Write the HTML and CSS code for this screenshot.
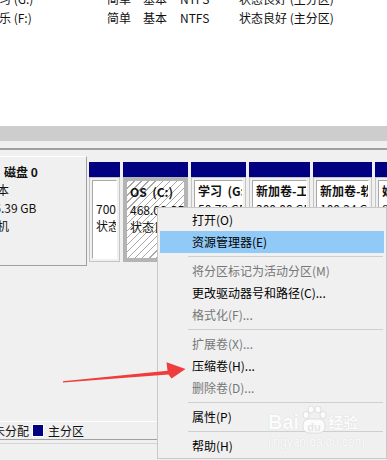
FILE: index.html
```html
<!DOCTYPE html>
<html lang="zh-CN">
<head>
<meta charset="utf-8">
<title>磁盘管理</title>
<link rel="stylesheet" href="styles.css">
</head>
<body>
<div class="screen">
  <div class="volumes">
    <div class="vol-list">
      <div class="row"><span>学习 (G:)</span><span>简单</span><span>基本</span><span>NTFS</span><span>状态良好 (主分区)</span></div>
      <div class="row"><span>娱乐 (F:)</span><span>简单</span><span>基本</span><span>NTFS</span><span>状态良好 (主分区)</span></div>
    </div>
  </div>
  <div class="hscroll"></div>
  <div class="splitter"></div>
  <div class="disks">
    <div class="disk">
      <div class="disk-label">
        <div class="dl-title">磁盘 0</div>
        <div class="dl-info">
          <div>基本</div>
          <div class="dl-size">476.39 GB</div>
          <div>联机</div>
        </div>
      </div>
      <div class="parts">
        <div class="part w1">
          <div class="phead"></div>
          <div class="pbody"><div class="pbox"><div>&nbsp;</div><div>700 MB</div><div>状态良好 (EFI 系统分区)</div></div></div>
        </div>
        <div class="part w2 sel">
          <div class="phead"></div>
          <div class="pbody"><div class="pbox"><div class="pname">OS&nbsp; (C:)</div><div>468.00 GB NTFS</div><div>状态良好 (启动, 页面文件)</div></div></div>
        </div>
        <div class="part w3">
          <div class="phead"></div>
          <div class="pbody"><div class="pbox"><div class="pname">学习&nbsp; (G:)</div><div>50.78 GB NTFS</div><div>状态良好 (主分区)</div></div></div>
        </div>
        <div class="part w4">
          <div class="phead"></div>
          <div class="pbody"><div class="pbox"><div class="pname">新加卷-工作 (E:)</div><div>300.00 GB NTFS</div><div>状态良好 (主分区)</div></div></div>
        </div>
        <div class="part w5">
          <div class="phead"></div>
          <div class="pbody"><div class="pbox"><div class="pname">新加卷-软件 (D:)</div><div>100.24 GB NTFS</div><div>状态良好 (主分区)</div></div></div>
        </div>
        <div class="part w6">
          <div class="phead"></div>
          <div class="pbody"><div class="pbox"><div class="pname">娱乐 (F:)</div><div>80.00 GB NTFS</div><div>状态良好 (主分区)</div></div></div>
        </div>
      </div>
    </div>
  </div>
  <div class="legend">
    <span class="lg-text">未分配</span>
    <span class="lg-swatch"></span>
    <span class="lg-text">主分区</span>
  </div>
  <div class="status-line"></div>

  <div class="menu">
    <div class="mi">打开(O)</div>
    <div class="mi hl">资源管理器(E)</div>
    <div class="sep"></div>
    <div class="mi dis">将分区标记为活动分区(M)</div>
    <div class="mi">更改驱动器号和路径(C)...</div>
    <div class="mi dis">格式化(F)...</div>
    <div class="sep"></div>
    <div class="mi dis">扩展卷(X)...</div>
    <div class="mi">压缩卷(H)...</div>
    <div class="mi dis">删除卷(D)...</div>
    <div class="sep"></div>
    <div class="mi">属性(P)</div>
    <div class="sep"></div>
    <div class="mi">帮助(H)</div>
  </div>

  <div class="wm">
    <div class="wm-top">
      <span class="wm-bai">Bai</span>
      <svg class="wm-paw" width="26" height="28" viewBox="0 0 26 28">
        <ellipse cx="5" cy="9" rx="3" ry="3.5"/>
        <ellipse cx="10" cy="3.5" rx="3" ry="3.5"/>
        <ellipse cx="17" cy="3.5" rx="3" ry="3.5"/>
        <ellipse cx="22" cy="9" rx="3" ry="3.5"/>
        <rect x="2" y="13" width="22" height="14" rx="6"/>
        <text x="13" y="24.5" text-anchor="middle">du</text>
      </svg>
      <span class="wm-jy">经验</span>
    </div>
    <div class="wm-url">jingyan.baidu.com</div>
  </div>

  <svg class="arrow" width="387" height="460" viewBox="0 0 387 460">
    <polygon points="63,381.2 63,382.6 168.5,374.6 171.5,378.5 185.5,369 166.5,362.2 167.5,370.8"/>
  </svg>
</div>
</body>
</html>
```

FILE: styles.css
```css
* {
  box-sizing: border-box;
  margin: 0;
  padding: 0;
}

body {
  margin: 0;
  width: 387px;
  height: 460px;
  overflow: hidden;
  background: #f0f0f0;
  font-family: "Noto Sans CJK SC", "Microsoft YaHei", sans-serif;
  font-size: 12px;
  color: #000;
}

.screen {
  position: relative;
  width: 387px;
  height: 460px;
  overflow: hidden;
}

/* volume list */
.volumes {
  height: 126px;
  background: #fff;
  overflow: hidden;
}

.vol-list {
  margin-top: -11px;
  margin-left: -13px;
}

.row {
  display: grid;
  grid-template-columns: 120px 36px 37px 59px auto;
  height: 19px;
  line-height: 19px;
  white-space: nowrap;
  color: #111;
}

.hscroll {
  height: 15px;
  background: #cdcdcd;
}

.splitter {
  height: 9px;
  background: #f0f0f0;
  border-bottom: 2px solid #a0a0a0;
}

/* disk area */
.disks {
  height: 271px;
  padding-top: 6px;
}

.disk {
  display: flex;
  height: 110px;
}

.disk-label {
  flex: none;
  width: 87px;
  border-top: 1px solid #fff;
  border-right: 1px solid #a0a0a0;
  border-bottom: 1px solid #a0a0a0;
  padding-top: 6px;
  line-height: 18px;
  overflow: hidden;
  white-space: nowrap;
  color: #111;
}

.dl-title {
  font-weight: bold;
  padding-left: 4px;
}

.dl-info {
  margin-left: -15px;
}

.dl-size {
  margin-left: -4px;
}

.parts {
  display: flex;
  gap: 3px;
  padding-left: 2px;
  padding-top: 6px;
  overflow: hidden;
}

.part {
  flex: none;
  display: flex;
  flex-direction: column;
}

.w1 { width: 31px; }
.w2 { width: 65px; }
.w3 { width: 55px; }
.w4 { width: 61px; }
.w5 { width: 59px; }
.w6 { width: 60px; }

.phead {
  height: 15px;
  background: #000080;
}

.pbody {
  height: 85px;
  border: 1px solid #c4c4c4;
  padding: 2px;
  background: #f0f0f0;
}

.pbox {
  height: 100%;
  background: #fff;
  border: 1px solid;
  border-color: #a8a8a8 #fff #fff #a8a8a8;
  padding: 1px 0 0 3px;
  line-height: 17.5px;
  overflow: hidden;
  white-space: nowrap;
  color: #111;
}

.pname {
  font-weight: bold;
}

.part.sel .pbody {
  background: #b4b4b4;
  border-color: #b4b4b4;
  padding: 3px;
}

.part.sel .pbox {
  border: none;
  padding: 2px 0 0 3px;
  background: repeating-linear-gradient(-45deg, #fff 0, #fff 4px, #a8a8a8 4px, #a8a8a8 5px);
}

/* legend */
.legend {
  height: 19px;
  border-top: 1px solid #fff;
  border-bottom: 1px solid #a0a0a0;
  display: flex;
  align-items: center;
  margin-left: -7px;
  line-height: 17px;
  white-space: nowrap;
  color: #111;
}

.lg-swatch {
  width: 12px;
  height: 13px;
  background: #000080;
  border: 1px solid #fff;
  margin: 0 4px 0 3px;
}

.status-line {
  margin-top: 3px;
  height: 1px;
  background: #d4d4d4;
}

/* context menu */
.menu {
  position: absolute;
  left: 157px;
  top: 207px;
  width: 230px;
  height: 252px;
  background: #f0f0f0;
  border: 1px solid #c8c8c8;
  padding: 1px 2px;
}

.mi {
  height: 22px;
  line-height: 22px;
  padding-left: 32px;
  white-space: nowrap;
  color: #000;
}

.mi.hl {
  background: #91c9f7;
}

.mi.dis {
  color: #777;
}

.sep {
  height: 7px;
  padding-top: 3px;
}

.sep::after {
  content: "";
  display: block;
  height: 1px;
  margin-left: 28px;
  margin-right: 1px;
  background: #cfcfcf;
}

/* watermark */
.wm {
  position: absolute;
  left: 268px;
  top: 400px;
  color: #fff;
  pointer-events: none;
  opacity: 0.85;
}

.wm-top {
  display: flex;
  align-items: flex-end;
  height: 34px;
}

.wm-bai {
  font-family: "Liberation Sans", sans-serif;
  font-weight: bold;
  font-size: 20px;
  line-height: 24px;
  color: #fff;
  text-shadow: 0 0 1px #c4c4c4;
}

.wm-paw {
  margin: 0 1px 0 2px;
  fill: #fff;
  stroke: #d4d4d4;
  stroke-width: 0.8;
}

.wm-paw text {
  font-family: "Liberation Sans", sans-serif;
  font-weight: bold;
  font-size: 11px;
  fill: #e4e4e4;
  stroke: none;
}

.wm-jy {
  font-size: 15px;
  line-height: 24px;
  font-weight: bold;
  color: #fff;
  text-shadow: 0 0 1px #c4c4c4;
}

.wm-url {
  font-family: "Liberation Sans", sans-serif;
  font-size: 12px;
  line-height: 14px;
  margin-top: 1px;
  color: #fff;
  text-shadow: 0 0 1px #cccccc;
}

/* red arrow overlay */
.arrow {
  position: absolute;
  left: 0;
  top: 0;
  pointer-events: none;
}

.arrow polygon {
  fill: #f03c3c;
}
```
